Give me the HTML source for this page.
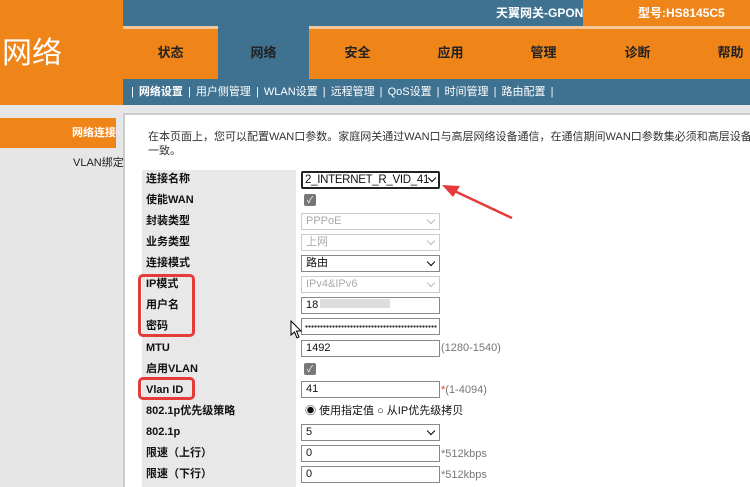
<!DOCTYPE html>
<html><head><meta charset="utf-8"><style>
*{margin:0;padding:0;box-sizing:border-box}
body{width:750px;height:487px;overflow:hidden;background:#fff;font-family:"Liberation Sans","Noto Sans CJK SC",sans-serif;position:relative}
.a{position:absolute}
.blue{background:#3f7291}
.or{background:#ef8419}
.tab{position:absolute;top:27px;height:52px;line-height:52px;text-align:center;font-size:13px;font-weight:bold;color:#222;width:65px}
.lbl{position:absolute;left:146px;font-size:11px;font-weight:bold;color:#111;line-height:14px;height:14px}
.in{position:absolute;left:301px;width:139px;height:17px;border:1px solid #888;background:#fff;font-size:11px;line-height:15px;padding-left:4px;color:#111;white-space:nowrap}
.dis{border-color:#ccc;color:#aaa}
.chev{position:absolute;right:5px;top:3px;width:6px;height:6px;border-right:1.5px solid #000;border-bottom:1.5px solid #000;transform:rotate(45deg)}
.dis .chev{border-color:#bbb;border-width:1px}
.cb{position:absolute;left:304px;width:12px;height:12px;background:#777;border-radius:2px;color:#fff;font-size:9px;line-height:12px;text-align:center}
.note{position:absolute;left:441px;font-size:11px;color:#777;line-height:14px}
.red{position:absolute;border:3px solid #e53b3b;border-radius:5px}
</style></head><body>
<div class="a or" style="left:0;top:0;width:123px;height:105px"></div>
<div class="a" style="left:2px;top:34px;font-size:30px;color:#fff;line-height:40px">网络</div>
<div class="a blue" style="left:123px;top:0;width:460px;height:26px"></div>
<div class="a or" style="left:583px;top:0;width:167px;height:26px"></div>
<div class="a" style="left:496px;top:6px;font-size:12px;font-weight:bold;color:#fff;line-height:14px">天翼网关-GPON</div>
<div class="a" style="left:638px;top:6px;font-size:12px;font-weight:bold;color:#fff;line-height:14px">型号:HS8145C5</div>
<div class="a or" style="left:123px;top:26px;width:627px;height:53px;border-top:3px solid #f6c79a"></div>
<div class="a blue" style="left:218px;top:26px;width:91px;height:53px"></div>
<div class="tab" style="left:138px">状态</div>
<div class="tab" style="left:231px">网络</div>
<div class="tab" style="left:325px">安全</div>
<div class="tab" style="left:418px">应用</div>
<div class="tab" style="left:511px">管理</div>
<div class="tab" style="left:605px">诊断</div>
<div class="tab" style="left:698px">帮助</div>
<div class="a blue" style="left:123px;top:79px;width:627px;height:26px"></div>
<div class="a" style="left:131px;top:85px;font-size:11px;color:#fff;white-space:nowrap;line-height:14px;word-spacing:2px">| <b>网络设置</b> | 用户侧管理 | WLAN设置 | 远程管理 | QoS设置 | 时间管理 | 路由配置 |</div>
<div class="a" style="left:0;top:105px;width:123px;height:382px;background:#e6e6e6"></div>
<div class="a" style="left:123px;top:105px;width:627px;height:8px;background:#e6e6e6"></div>
<div class="a or" style="left:0;top:118px;width:116px;height:30px"></div>
<div class="a" style="left:72px;top:126px;font-size:11px;font-weight:bold;color:#fff;line-height:14px">网络连接</div>
<div class="a" style="left:73px;top:156px;font-size:11px;color:#222;line-height:14px">VLAN绑定</div>
<div class="a" style="left:123px;top:113px;width:627px;height:374px;border-left:2px solid #ccc;border-top:2px solid #ccc"></div>
<div class="a" style="left:148px;top:130px;font-size:11px;color:#333;line-height:14px;white-space:nowrap">在本页面上，您可以配置WAN口参数。家庭网关通过WAN口与高层网络设备通信，在通信期间WAN口参数集必须和高层设备参数<br>一致。</div>
<div class="a" style="left:142px;top:170px;width:154px;height:317px;background:#e8e8e8"></div>
<div class="lbl" style="top:172px">连接名称</div>
<div class="lbl" style="top:193px">使能WAN</div>
<div class="lbl" style="top:214px">封装类型</div>
<div class="lbl" style="top:235px">业务类型</div>
<div class="lbl" style="top:256px">连接模式</div>
<div class="lbl" style="top:277px">IP模式</div>
<div class="lbl" style="top:298px">用户名</div>
<div class="lbl" style="top:319px">密码</div>
<div class="lbl" style="top:341px">MTU</div>
<div class="lbl" style="top:362px">启用VLAN</div>
<div class="lbl" style="top:383px">Vlan ID</div>
<div class="lbl" style="top:404px">802.1p优先级策略</div>
<div class="lbl" style="top:425px">802.1p</div>
<div class="lbl" style="top:446px">限速（上行）</div>
<div class="lbl" style="top:467px">限速（下行）</div>
<div class="in" style="top:171px;height:18px;border:2px solid #222;border-radius:2px;font-size:11.5px;letter-spacing:-0.3px;line-height:14px;padding-left:2px;overflow:hidden">2_INTERNET_R_VID_41<span class="chev" style="right:3px;top:2px"></span></div>
<div class="cb" style="top:194px">✓</div>
<div class="in dis" style="top:213px">PPPoE<span class="chev"></span></div>
<div class="in dis" style="top:234px">上网<span class="chev"></span></div>
<div class="in" style="top:255px">路由<span class="chev"></span></div>
<div class="in dis" style="top:276px">IPv4&amp;IPv6<span class="chev"></span></div>
<div class="in" style="top:297px">18<span style="display:inline-block;width:70px;height:9px;background:#ddd;margin-left:2px"></span></div>
<div class="in" style="top:318px;overflow:hidden;padding-left:3px;padding-top:6px"><div style="height:3px;width:132px;background:radial-gradient(circle,#222 1px,transparent 1.2px) 0 0/3px 3px"></div></div>
<div class="in" style="top:340px">1492</div><div class="note" style="top:341px">(1280-1540)</div>
<div class="cb" style="top:363px">✓</div>
<div class="in" style="top:381px">41</div><div class="note" style="top:383px"><span style="color:#e33">*</span>(1-4094)</div>
<div class="a" style="left:305px;top:404px;font-size:11px;color:#111;line-height:14px">◉ 使用指定值 ○ 从IP优先级拷贝</div>
<div class="in" style="top:424px">5<span class="chev"></span></div>
<div class="in" style="top:445px">0</div><div class="note" style="top:447px">*512kbps</div>
<div class="in" style="top:466px">0</div><div class="note" style="top:468px">*512kbps</div>
<div class="red" style="left:138px;top:274px;width:57px;height:63px"></div>
<div class="red" style="left:138px;top:377px;width:57px;height:23px"></div>
<svg class="a" style="left:440px;top:180px" width="80" height="45"><line x1="72" y1="38" x2="8" y2="8" stroke="#e53b3b" stroke-width="2.5"/><polygon points="2,5 20,6 13,17" fill="#e53b3b"/></svg>
<svg class="a" style="left:290px;top:320px" width="14" height="20"><path d="M1 1 L1 15 L4.5 12 L7 18 L9 17 L6.5 11 L11 11 Z" fill="#fff" stroke="#000"/></svg>
</body></html>
